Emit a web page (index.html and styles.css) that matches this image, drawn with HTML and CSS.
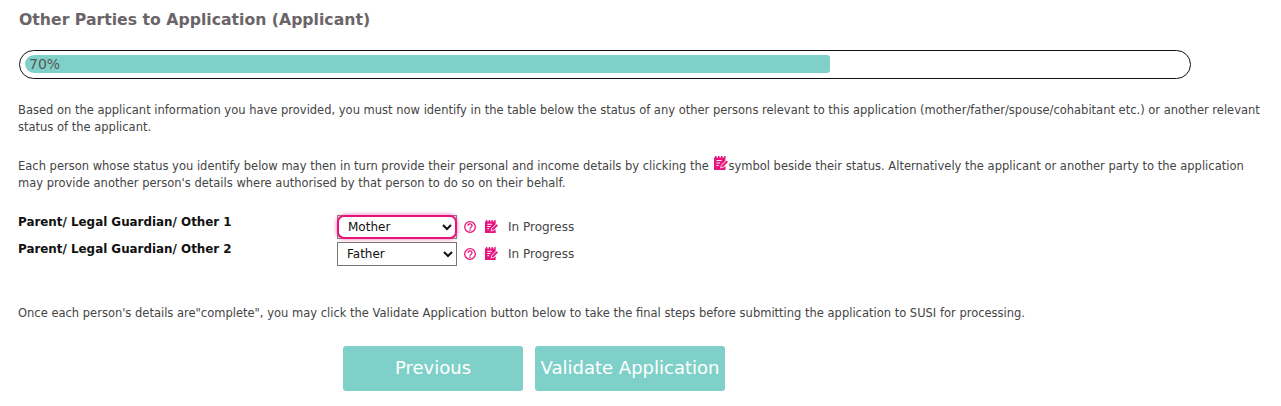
FILE: index.html
```html
<!DOCTYPE html>
<html lang="en">
<head>
  <title>Other Parties to Application</title>
  <link rel="stylesheet" href="styles.css">
</head>
<body>

  <svg class="defs" width="0" height="0">
    <symbol id="edit" viewBox="0 0 14 14">
      <path fill="#e6147c" d="M0 1.500h1V0h1.500v1.500H4V0h1.500v1.500H7V0h1.500v1.500H10V0h1.500v4.500L7 9l-1 3.500 3.500-1L11.500 10v4H0z"/>
      <path fill="#e6147c" d="M7.800 9.200L12.500 4.500 14 6l-4.700 4.700-2.300.8z"/>
      <path stroke="#fff" stroke-width="1.100" fill="none" d="M2.500 4.500l5 0M2.500 7h3.500M2.500 9.500h2"/>
    </symbol>
    <symbol id="help" viewBox="0 0 12 12">
      <circle cx="6" cy="6" r="5.300" fill="none" stroke="#e6147c" stroke-width="1.300"/>
      <path d="M4 4.800a2 1.900 0 1 1 3.100 1.500c-.8.500-1.100.7-1.100 1.500" fill="none" stroke="#e6147c" stroke-width="1.300"/>
      <rect x="5.300" y="8.500" width="1.400" height="1.400" fill="#e6147c"/>
    </symbol>
  </svg>

  <h1 class="title">Other Parties to Application (Applicant)</h1>

  <div class="progress">
    <div class="progress-bar" style="width: 70%">70%</div>
  </div>

  <p class="intro">Based on the applicant information you have provided, you must now identify in the table below the status of any other persons relevant to this application (mother/father/spouse/cohabitant etc.) or another relevant status of the applicant.</p>

  <p class="intro">Each person whose status you identify below may then in turn provide their personal and income details by clicking the <svg class="icon-inline"><use href="#edit"/></svg>symbol beside their status. Alternatively the applicant or another party to the application may provide another person's details where authorised by that person to do so on their behalf.</p>

  <div class="parties">
    <div class="party-labels">
      <div>Parent/ Legal Guardian/ Other 1</div>
      <div>Parent/ Legal Guardian/ Other 2</div>
    </div>
    <div class="party-rows">
      <div class="party-row">
        <div class="status-wrap">
          <select class="status focused">
            <option>Mother</option>
            <option>Father</option>
          </select>
        </div>
        <svg class="icon-help"><use href="#help"/></svg>
        <svg class="icon-edit"><use href="#edit"/></svg>
        <span>In Progress</span>
      </div>
      <div class="party-row">
        <div class="status-wrap">
          <select class="status">
            <option>Father</option>
            <option>Mother</option>
          </select>
        </div>
        <svg class="icon-help"><use href="#help"/></svg>
        <svg class="icon-edit"><use href="#edit"/></svg>
        <span>In Progress</span>
      </div>
    </div>
  </div>

  <p class="outro">Once each person's details are"complete", you may click the Validate Application button below to take the final steps before submitting the application to SUSI for processing.</p>

  <div class="actions">
    <button class="btn btn-prev" type="button">Previous</button>
    <button class="btn btn-validate" type="button">Validate Application</button>
  </div>

</body>
</html>
```

FILE: styles.css
```css
* { box-sizing: border-box; margin: 0; padding: 0; }
body {
  font-family: "DejaVu Sans", Verdana, sans-serif;
  font-size: 11.5px;
  line-height: 17px;
  color: #444;
  background-color: #fff;
  padding: 10px 15px 0 18px;
  overflow: hidden;
}
.defs { display: block; height: 0; }
.title {
  font-size: 15.7px;
  font-weight: bold;
  line-height: 20px;
  color: #6b6468;
  padding-left: 1px;
}
.progress {
  width: 1172px;
  height: 29px;
  margin: 20px 0 0 1px;
  padding: 4px 15px 4px 5px;
  border: 1px solid #111;
  border-radius: 15px;
  background-color: #fff;
}
.progress-bar {
  height: 18px;
  line-height: 18px;
  font-size: 14px;
  color: #555;
  padding-left: 4px;
  background-color: #7fd0c9;
  border-radius: 9px 3px 3px 9px;
}
.intro { margin-top: 23px; }
.intro + .intro { margin-top: 20px; }
.icon-inline { width: 14px; height: 14px; margin-left: 2px; vertical-align: 0; }
.parties { display: flex; margin-top: 21px; }
.party-labels {
  width: 319px;
  font-size: 11.900px;
  font-weight: bold;
  color: #111;
  line-height: 27px;
  margin-top: -4px;
}
.party-row {
  display: flex;
  align-items: center;
  height: 27px;
  font-size: 12px;
}
.status-wrap {
  width: 120px;
  height: 24px;
  border: 1px solid #767676;
}
.status {
  display: block;
  width: 118px;
  height: 22px;
  padding-left: 5px;
  font-family: inherit;
  font-size: 12px;
  color: #111;
  background-color: #fff;
  border: none;
}
.status.focused {
  width: 120px;
  height: 24px;
  margin: -1px;
  padding-left: 5px;
  border: 2px solid #e6147c;
  border-radius: 7px;
  box-shadow: 0 0 4px #f06aa8;
}
.icon-help { width: 12px; height: 12px; margin-left: 7px; }
.icon-edit { width: 13px; height: 13px; margin-left: 9px; }
.party-row span { margin-left: 10px; padding-top: 2px; }
.outro { margin-top: 38px; }
.actions {
  display: flex;
  gap: 12px;
  margin: 24px 0 0 325px;
}
.btn {
  height: 45px;
  padding-bottom: 2px;
  font-family: inherit;
  font-size: 18px;
  color: #fff;
  background-color: #7fd0c9;
  border: none;
  border-radius: 3px;
}
.btn-prev { width: 180px; }
.btn-validate { width: 190px; }
```
